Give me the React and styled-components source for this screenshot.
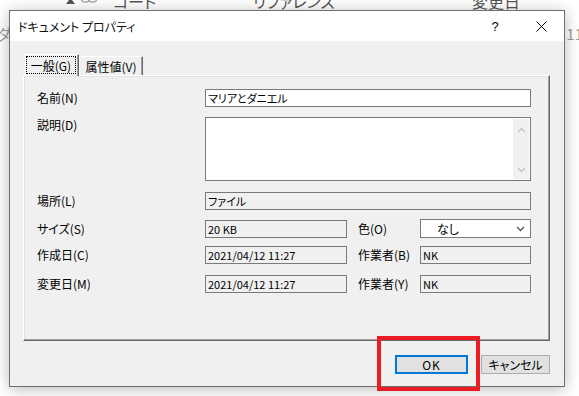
import React from "react";
import styled, { createGlobalStyle } from "styled-components";

const jp = `"Noto Sans CJK JP", "Noto Sans", sans-serif`;

const GlobalStyle = createGlobalStyle`
  body {
    margin: 0;
    background: #fff;
    overflow: hidden;
  }
`;

const Screen = styled.div`
  position: relative;
  width: 579px;
  height: 396px;
  overflow: hidden;
  background: #fff;
  font-family: ${jp};
  font-feature-settings: "palt";
`;

// the list window that sits behind the dialog
const BgHeader = styled.div`
  display: flex;
  align-items: center;
  height: 16px;
  margin-top: -7px;
  font-size: 16px;
  line-height: 16px;
  color: #555;
`;
const BgCol = styled.div`
  width: ${p => p.$w}px;
  flex: none;
  white-space: nowrap;
  display: flex;
  align-items: center;
`;
const BgRow = styled.div`
  display: flex;
  justify-content: space-between;
  margin: 17px -4px 0 -3px;
  font-size: 15px;
  line-height: 15px;
  color: #9a9a9a;
`;

const Dialog = styled.div`
  position: absolute;
  left: 9px;
  top: 10px;
  width: 556px;
  height: 377px;
  box-sizing: border-box;
  border: 1px solid #707070;
  background: #f0f0f0;
  box-shadow: 0 2px 14px rgba(0, 0, 0, 0.28);
  display: flex;
  flex-direction: column;
`;
const TitleBar = styled.div`
  height: 30px;
  flex: none;
  background: #fff;
  display: flex;
  align-items: center;
  padding-left: 8px;
`;
const Title = styled.div`
  flex: 1;
  font-size: 12px;
  color: #111;
`;
const CaptionButton = styled.div`
  width: 46px;
  height: 30px;
  display: flex;
  align-items: center;
  justify-content: center;
  font-size: 13px;
  color: #000;
  font-family: "Liberation Sans", sans-serif;
`;

const Body = styled.div`
  padding: 13px 14px 0 13px;
`;
const TabStrip = styled.div`
  display: flex;
  align-items: flex-end;
  height: 21px;
  padding-left: 2px;
`;
const Tab = styled.div`
  position: relative;
  z-index: ${p => (p.$active ? 1 : 0)};
  width: ${p => p.$w}px;
  height: ${p => (p.$active ? 22 : 19)}px;
  margin-bottom: ${p => (p.$active ? -1 : 0)}px;
  box-sizing: border-box;
  background: #f0f0f0;
  border-top: 1px solid #fff;
  border-left: 1px solid #fff;
  border-right: 1px solid #696969;
  box-shadow: inset -1px 0 0 #a0a0a0;
  display: flex;
  align-items: ${p => (p.$active ? "flex-start" : "center")};
  justify-content: center;
  font-size: 12px;
  color: #000;
`;
const FocusRing = styled.div`
  margin: 1px 2px 0 0;
  width: 51px;
  height: 18px;
  box-sizing: border-box;
  border: 1px dotted #000;
  display: flex;
  align-items: center;
  justify-content: center;
`;

const Panel = styled.div`
  height: 266px;
  box-sizing: border-box;
  border-top: 1px solid #fff;
  border-left: 1px solid #fff;
  border-right: 1px solid #696969;
  border-bottom: 1px solid #696969;
  box-shadow: inset -1px -1px 0 #a0a0a0, inset 1px 1px 0 #e3e3e3;
  padding: 13px 17px 0 13px;
`;
const Row = styled.div`
  display: flex;
  align-items: ${p => (p.$top ? "flex-start" : "center")};
  margin-top: ${p => p.$mt || 0}px;
`;
const Label = styled.div`
  width: ${p => p.$w}px;
  margin-left: ${p => p.$ml || 0}px;
  flex: none;
  font-size: 12px;
  line-height: 16px;
  color: #000;
`;
const Field = styled.div`
  position: relative;
  width: ${p => p.$w}px;
  height: ${p => p.$h || 18}px;
  flex: none;
  box-sizing: border-box;
  border: 1px solid #7a7a7a;
  background: ${p => (p.$ro ? "#f0f0f0" : "#fff")};
  display: flex;
  align-items: ${p => (p.$multi ? "stretch" : "center")};
  justify-content: space-between;
  padding-left: 2px;
  font-size: 11px;
  line-height: 14px;
  color: #000;
  white-space: nowrap;
`;
const ScrollBar = styled.div`
  width: 16px;
  margin: 1px;
  background: #f0f0f0;
  display: flex;
  flex-direction: column;
  align-items: center;
  justify-content: space-between;
  padding: 8px 0 6px;
`;
const SelectText = styled.div`
  padding-left: 14px;
  font-size: 12px;
`;
const Chevron = styled.svg`
  display: block;
  margin-right: ${p => p.$mr || 0}px;
`;

const ButtonRow = styled.div`
  display: flex;
  justify-content: flex-end;
  gap: 13px;
  margin-top: 14px;
`;
const Button = styled.div`
  width: ${p => p.$w}px;
  height: 19px;
  box-sizing: border-box;
  border: ${p => (p.$default ? "2px solid #0078d7" : "1px solid #adadad")};
  background: #e1e1e1;
  display: flex;
  align-items: center;
  justify-content: center;
  font-size: 12px;
  color: #000;
  letter-spacing: ${p => (p.$default ? 1 : 0)}px;
`;

const Highlight = styled.div`
  position: absolute;
  left: 377px;
  top: 336px;
  width: 103px;
  height: 55px;
  box-sizing: border-box;
  border: 4px solid #ed1c24;
  z-index: 5;
`;

const Arrow = ({ up, color = "#c2c2c2", w = 9, h = 6, mr }) => (
  <Chevron width={w} height={h} viewBox="0 0 9 6" $mr={mr}>
    <path
      d={up ? "M1 5 L4.5 1.5 L8 5" : "M1 1 L4.5 4.5 L8 1"}
      fill="none"
      stroke={color}
      strokeWidth="1.3"
    />
  </Chevron>
);

const LinkIcon = () => (
  <svg width="18" height="10" viewBox="0 0 18 10">
    <rect x="1" y="-4" width="9" height="10" rx="4" fill="none" stroke="#aaa" strokeWidth="1.6" />
    <rect x="8" y="-4" width="9" height="10" rx="4" fill="none" stroke="#aaa" strokeWidth="1.6" />
  </svg>
);

export default function App() {
  return (
    <Screen>
      <GlobalStyle />
      <BgHeader>
        <BgCol $w={66} />
        <BgCol $w={14}>
          <svg width="9" height="6" viewBox="0 0 9 6">
            <path d="M0 6 L4.5 0 L9 6 Z" fill="#555" />
          </svg>
        </BgCol>
        <BgCol $w={33}>
          <LinkIcon />
        </BgCol>
        <BgCol $w={140}>コード</BgCol>
        <BgCol $w={219}>リファレンス</BgCol>
        <BgCol $w={80}>変更日</BgCol>
      </BgHeader>
      <BgRow>
        <span>ダ</span>
        <span>11</span>
      </BgRow>

      <Dialog>
        <TitleBar>
          <Title>ドキュメント プロパティ</Title>
          <CaptionButton>?</CaptionButton>
          <CaptionButton>
            <svg width="11" height="11" viewBox="0 0 11 11">
              <path d="M0.5 0.5 L10.5 10.5 M10.5 0.5 L0.5 10.5" stroke="#000" strokeWidth="1" />
            </svg>
          </CaptionButton>
        </TitleBar>

        <Body>
          <TabStrip>
            <Tab $active $w={54}>
              <FocusRing>一般(G)</FocusRing>
            </Tab>
            <Tab $w={64}>属性値(V)</Tab>
          </TabStrip>

          <Panel>
            <Row>
              <Label $w={168}>名前(N)</Label>
              <Field $w={326}>マリアとダニエル</Field>
            </Row>
            <Row $top $mt={10}>
              <Label $w={168}>説明(D)</Label>
              <Field $w={326} $h={64} $multi>
                <span />
                <ScrollBar>
                  <Arrow up />
                  <Arrow />
                </ScrollBar>
              </Field>
            </Row>
            <Row $mt={11}>
              <Label $w={168}>場所(L)</Label>
              <Field $w={326} $ro>ファイル</Field>
            </Row>
            <Row $mt={9}>
              <Label $w={168}>サイズ(S)</Label>
              <Field $w={142} $ro>20 KB</Field>
              <Label $w={62} $ml={11}>色(O)</Label>
              <Field $w={111} $h={19}>
                <SelectText>なし</SelectText>
                <Arrow color="#555" w={9} h={6} mr={5} />
              </Field>
            </Row>
            <Row $mt={8}>
              <Label $w={168}>作成日(C)</Label>
              <Field $w={142} $ro>2021/04/12 11:27</Field>
              <Label $w={62} $ml={11}>作業者(B)</Label>
              <Field $w={111} $ro>NK</Field>
            </Row>
            <Row $mt={11}>
              <Label $w={168}>変更日(M)</Label>
              <Field $w={142} $ro>2021/04/12 11:27</Field>
              <Label $w={62} $ml={11}>作業者(Y)</Label>
              <Field $w={111} $ro>NK</Field>
            </Row>
          </Panel>

          <ButtonRow>
            <Button $default $w={73}>OK</Button>
            <Button $w={69}>キャンセル</Button>
          </ButtonRow>
        </Body>
      </Dialog>

      <Highlight />
    </Screen>
  );
}
